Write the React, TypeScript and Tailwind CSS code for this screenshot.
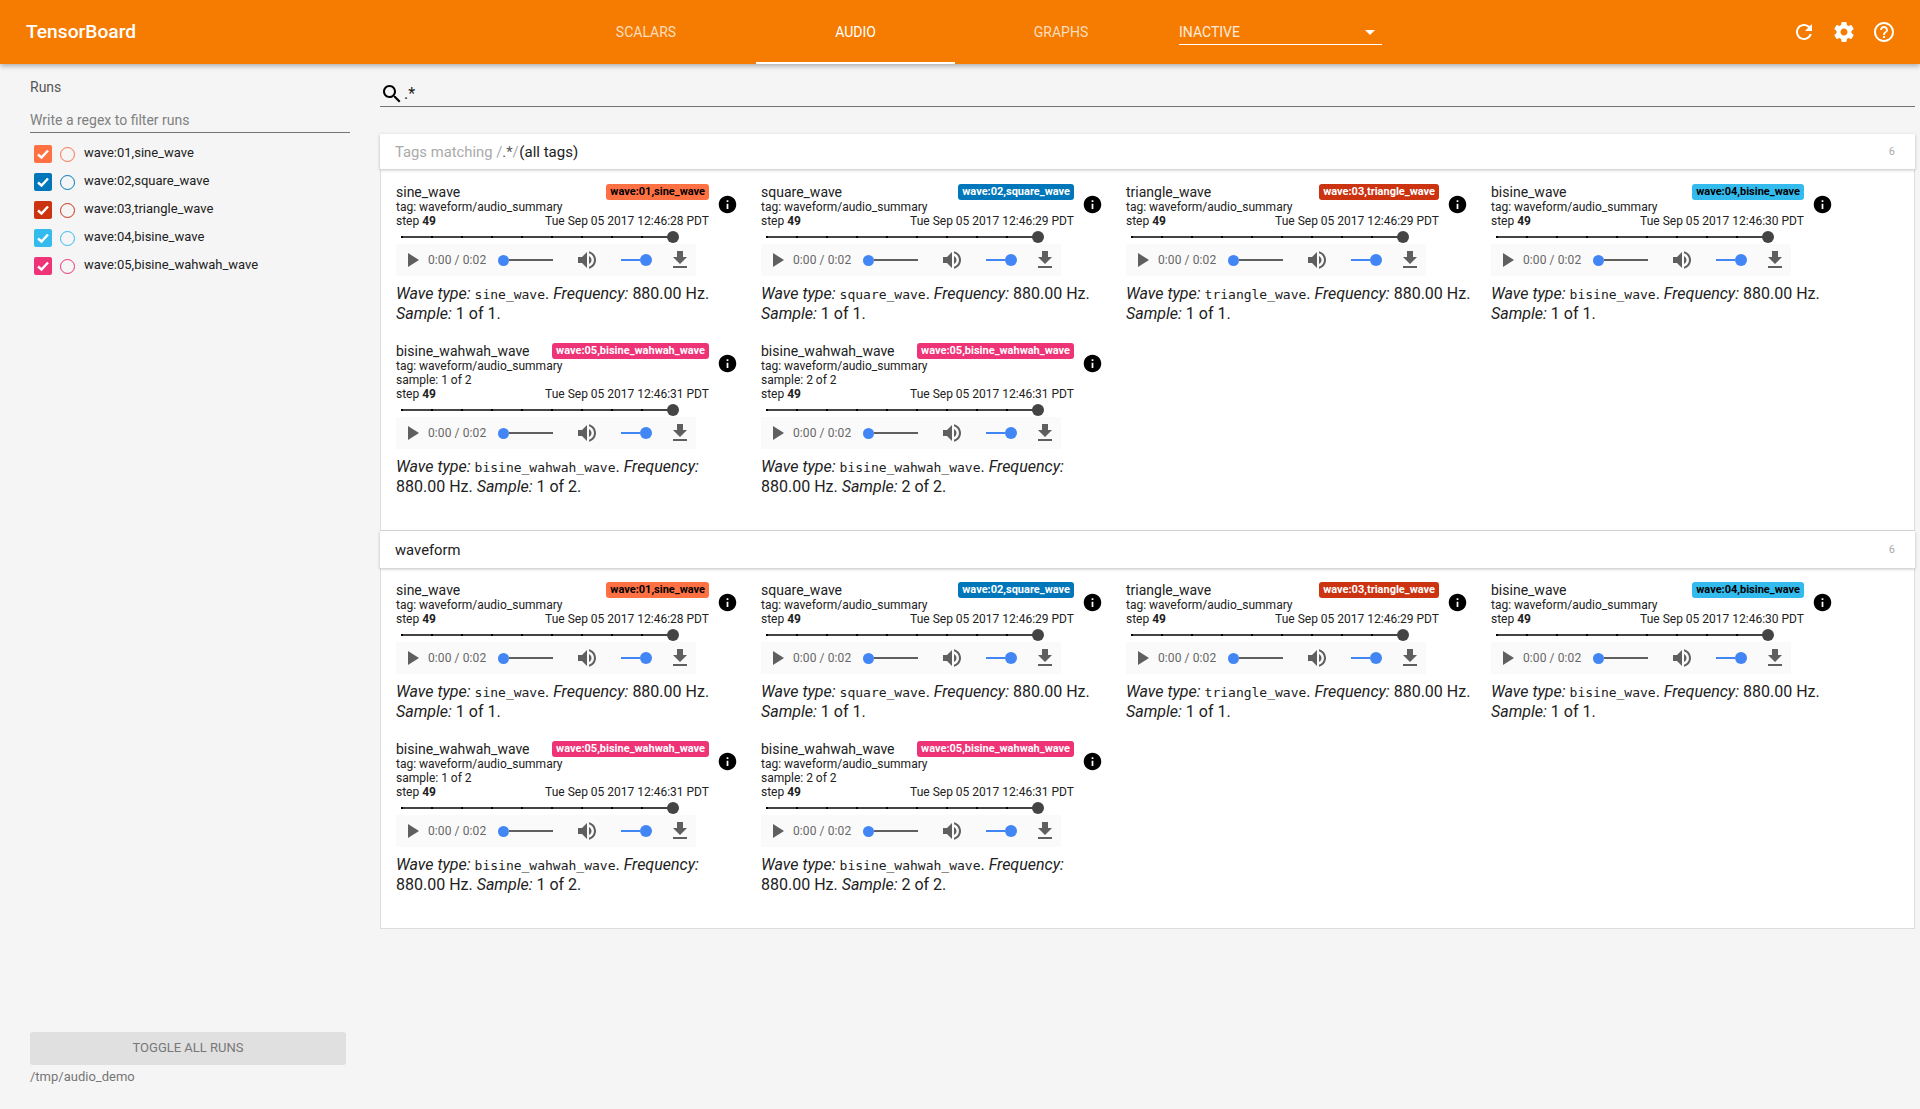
import React from 'react';

const runs = [
  { name: 'wave:01,sine_wave', color: '#ff7043' },
  { name: 'wave:02,square_wave', color: '#0077bb' },
  { name: 'wave:03,triangle_wave', color: '#cc3311' },
  { name: 'wave:04,bisine_wave', color: '#33bbee' },
  { name: 'wave:05,bisine_wahwah_wave', color: '#ee3377' },
];

const cards = [
  { title: 'sine_wave', run: 0, wave: 'sine_wave', date: 'Tue Sep 05 2017 12:46:28 PDT', n: 1, of: 1, dark: true },
  { title: 'square_wave', run: 1, wave: 'square_wave', date: 'Tue Sep 05 2017 12:46:29 PDT', n: 1, of: 1 },
  { title: 'triangle_wave', run: 2, wave: 'triangle_wave', date: 'Tue Sep 05 2017 12:46:29 PDT', n: 1, of: 1 },
  { title: 'bisine_wave', run: 3, wave: 'bisine_wave', date: 'Tue Sep 05 2017 12:46:30 PDT', n: 1, of: 1, dark: true },
  { title: 'bisine_wahwah_wave', run: 4, wave: 'bisine_wahwah_wave', date: 'Tue Sep 05 2017 12:46:31 PDT', n: 1, of: 2, sample: 'sample: 1 of 2' },
  { title: 'bisine_wahwah_wave', run: 4, wave: 'bisine_wahwah_wave', date: 'Tue Sep 05 2017 12:46:31 PDT', n: 2, of: 2, sample: 'sample: 2 of 2' },
];

const Icon = ({ d, className }: { d: string; className: string }) => (
  <svg viewBox="0 0 24 24" fill="currentColor" className={className}>
    <path d={d} />
  </svg>
);

const icons = {
  search: 'M15.5 14h-.79l-.28-.27C15.41 12.59 16 11.11 16 9.5 16 5.91 13.09 3 9.5 3S3 5.91 3 9.5 5.91 16 9.5 16c1.61 0 3.09-.59 4.23-1.57l.27.28v.79l5 4.99L20.49 19l-4.99-5zm-6 0C7.01 14 5 11.99 5 9.5S7.01 5 9.5 5 14 7.01 14 9.5 11.99 14 9.5 14z',
  refresh: 'M17.65 6.35C16.2 4.9 14.21 4 12 4c-4.42 0-7.99 3.58-7.99 8s3.57 8 7.99 8c3.73 0 6.84-2.55 7.73-6h-2.08c-.82 2.33-3.04 4-5.65 4-3.31 0-6-2.69-6-6s2.69-6 6-6c1.66 0 3.14.69 4.22 1.78L13 11h7V4l-2.35 2.35z',
  settings: 'M19.43 12.98c.04-.32.07-.64.07-.98s-.03-.66-.07-.98l2.11-1.65c.19-.15.24-.42.12-.64l-2-3.46c-.12-.22-.39-.3-.61-.22l-2.49 1c-.52-.4-1.08-.73-1.69-.98l-.38-2.65C14.46 2.18 14.25 2 14 2h-4c-.25 0-.46.18-.49.42l-.38 2.65c-.61.25-1.17.59-1.69.98l-2.49-1c-.23-.09-.49 0-.61.22l-2 3.46c-.13.22-.07.49.12.64l2.11 1.65c-.04.32-.07.65-.07.98s.03.66.07.98l-2.11 1.65c-.19.15-.24.42-.12.64l2 3.46c.12.22.39.3.61.22l2.49-1c.52.4 1.08.73 1.69.98l.38 2.65c.03.24.24.42.49.42h4c.25 0 .46-.18.49-.42l.38-2.65c.61-.25 1.17-.59 1.69-.98l2.49 1c.23.09.49 0 .61-.22l2-3.46c.12-.22.07-.49-.12-.64l-2.11-1.65zM12 15.5c-1.93 0-3.5-1.57-3.5-3.5s1.57-3.5 3.5-3.5 3.5 1.57 3.5 3.5-1.57 3.5-3.5 3.5z',
  help: 'M11 18h2v-2h-2v2zm1-16C6.48 2 2 6.48 2 12s4.48 10 10 10 10-4.48 10-10S17.52 2 12 2zm0 18c-4.41 0-8-3.59-8-8s3.59-8 8-8 8 3.59 8 8-3.59 8-8 8zm0-14c-2.21 0-4 1.79-4 4h2c0-1.1.9-2 2-2s2 .9 2 2c0 2-3 1.75-3 5h2c0-2.25 3-2.5 3-5 0-2.21-1.79-4-4-4z',
  info: 'M12 2C6.48 2 2 6.48 2 12s4.48 10 10 10 10-4.48 10-10S17.52 2 12 2zm1 15h-2v-6h2v6zm0-8h-2V7h2v2z',
  volume: 'M3 9v6h4l5 5V4L7 9H3zm13.5 3c0-1.77-1.02-3.29-2.5-4.03v8.05c1.48-.73 2.5-2.25 2.5-4.02zM14 3.23v2.06c2.89.86 5 3.54 5 6.71s-2.11 5.85-5 6.71v2.06c4.01-.91 7-4.49 7-8.77s-2.99-7.86-7-8.77z',
  download: 'M19 9h-4V3H9v6H5l7 7 7-7zM5 18v2h14v-2H5z',
};

const Player = () => (
  <div className="flex h-8 w-[300px] items-center bg-[#fafafa] text-[#5f6368]">
    <svg viewBox="0 0 11 14" fill="#5f5f5f" className="ml-3 h-[14px] w-[11px]">
      <path d="M0 0l11 7-11 7z" />
    </svg>
    <span className="ml-[9px] w-[58px] text-xs tracking-[0.1px] whitespace-nowrap text-[#666]">0:00 / 0:02</span>
    <div className="ml-3 flex w-[55px] items-center">
      <div className="h-[11px] w-[11px] rounded-full bg-[#4285f4]" />
      <div className="h-[2px] flex-1 bg-[#5f5f5f]" />
    </div>
    <Icon d={icons.volume} className="ml-[22px] h-6 w-6 text-[#5f5f5f]" />
    <div className="ml-[22px] flex w-[31px] items-center">
      <div className="h-[2px] flex-1 bg-[#4285f4]" />
      <div className="h-3 w-3 rounded-full bg-[#4285f4]" />
    </div>
    <Icon d={icons.download} className="ml-4 h-6 w-6 text-[#5f5f5f]" />
  </div>
);

const StepSlider = () => (
  <div className="ml-[5px] flex h-4 items-center pt-[2px]">
    <div className="flex h-[2px] w-[272px] items-center justify-between bg-[#444]">
      {Array.from({ length: 10 }, (_, i) => (
        <span key={i} className="h-[2px] w-[2px] bg-black" />
      ))}
    </div>
    <div className="-ml-[6px] h-3 w-3 rounded-full bg-[#444]" />
  </div>
);

const AudioCard = ({ card }: { card: (typeof cards)[number] }) => {
  const run = runs[card.run];
  return (
    <div className="mb-5 w-[365px]">
      <div className="flex">
        <div className="w-[313px] text-xs leading-[14px] text-[#212121]">
          <div className="flex h-4 items-center justify-between">
            <span className="text-sm leading-4">{card.title}</span>
            <span
              className={`h-4 rounded-[3px] px-1 text-[11px] leading-4 font-bold ${card.dark ? 'text-black' : 'text-white'}`}
              style={{ backgroundColor: run.color }}
            >
              {run.name}
            </span>
          </div>
          <div>tag: waveform/audio_summary</div>
          {card.sample && <div>{card.sample}</div>}
          <div className="flex justify-between">
            <span>
              step <b className="font-bold">49</b>
            </span>
            <span>{card.date}</span>
          </div>
          <StepSlider />
          <Player />
        </div>
        <Icon d={icons.info} className="mt-[10px] ml-2 h-[21px] w-[21px] text-black" />
      </div>
      <p className="mt-2 w-[350px] text-base leading-[19px] text-[#212121]">
        <i>Wave type:</i> <code className="font-['DejaVu_Sans_Mono',monospace] text-[13px]">{card.wave}</code>. <i>Frequency:</i> 880.00 Hz. <i>Sample:</i> {card.n} of {card.of}.
      </p>
    </div>
  );
};

const Section = ({ title, tall }: { title: React.ReactNode; tall?: boolean }) => (
  <section>
    <div className={`relative flex items-center justify-between bg-white pt-[1px] pr-[20px] pl-[15px] shadow-[0_1px_3px_rgba(0,0,0,0.25)] ${tall ? 'h-[37px]' : 'h-[35px]'}`}>
      <span className="text-[14.8px] text-[#212121]">{title}</span>
      <span className="text-[11px] text-[#aaa]">6</span>
    </div>
    <div className={`flex flex-wrap border-x border-b border-[#ddd] bg-white pb-[14px] pl-[15px] ${tall ? 'pt-[14px]' : 'pt-[15px]'}`}>
      {cards.map((c, i) => (
        <AudioCard key={i} card={c} />
      ))}
    </div>
  </section>
);

export default function App() {
  return (
    <div className="flex h-[1109px] flex-col overflow-hidden bg-[#f5f5f5] font-['Roboto',sans-serif]">
      <header className="relative z-10 flex h-16 items-center bg-[#f57c00] text-white shadow-[0_2px_5px_rgba(0,0,0,0.3)]">
        <div className="w-[536px] pl-[26px] text-[19.2px] font-medium">TensorBoard</div>
        <nav className="flex h-full text-sm">
          <div className="flex w-[220px] items-center justify-center text-white/75">SCALARS</div>
          <div className="flex w-[199px] items-center justify-center border-b-2 border-white pt-[2px]">AUDIO</div>
          <div className="flex w-[212px] items-center justify-center text-white/75">GRAPHS</div>
        </nav>
        <div className="mt-[1px] ml-3 flex h-6 w-[203px] items-center justify-between border-b border-white pr-[7px] text-sm text-white/85">
          <span>INACTIVE</span>
          <svg viewBox="0 0 10 5" fill="white" className="h-[5px] w-[10px]">
            <path d="M0 0h10L5 5z" />
          </svg>
        </div>
        <div className="ml-auto flex pr-4">
          <span className="flex h-10 w-10 items-center justify-center"><Icon d={icons.refresh} className="h-6 w-6" /></span>
          <span className="flex h-10 w-10 items-center justify-center"><Icon d={icons.settings} className="h-6 w-6" /></span>
          <span className="flex h-10 w-10 items-center justify-center"><Icon d={icons.help} className="h-6 w-6" /></span>
        </div>
      </header>

      <div className="flex flex-1">
        <aside className="flex w-[380px] flex-col pl-[30px]">
          <div className="mt-[15px] text-sm leading-4 text-[#555]">Runs</div>
          <div className="mt-[17px] h-[21px] w-[320px] border-b border-[#757575] text-sm leading-4 text-[#808080]">Write a regex to filter runs</div>
          <div className="mt-[7px]">
            {runs.map(r => (
              <div key={r.name} className="flex h-7 items-center pl-1">
                <span className="flex h-[18px] w-[18px] items-center justify-center rounded-[2px]" style={{ backgroundColor: r.color }}>
                  <svg viewBox="0 0 18 18" fill="none" stroke="white" strokeWidth="2.4" className="h-[18px] w-[18px]">
                    <path d="M4 9.5l3.5 3L14 5.5" />
                  </svg>
                </span>
                <span className="ml-2 h-[15px] w-[15px] rounded-full border-[1.5px]" style={{ borderColor: r.color }} />
                <span className="mb-[2px] ml-[9px] text-[13px] text-[#212121]">{r.name}</span>
              </div>
            ))}
          </div>
          <div className="mt-auto mb-[23px]">
            <div className="flex h-[33px] w-[316px] items-center justify-center rounded-[3px] bg-[#e0e0e0] text-[13px] text-[#777]">TOGGLE ALL RUNS</div>
            <div className="mt-[2px] text-[13px] text-[#757575]">/tmp/audio_demo</div>
          </div>
        </aside>

        <main className="flex-1 pr-[5px]">
          <div className="flex h-[43px] items-center border-b border-[#757575] pt-[18px] text-base text-[#212121]">
            <Icon d={icons.search} className="h-6 w-6 shrink-0 text-black" />
            <span>.*</span>
          </div>
          <div className="mt-[27px]">
            <Section
              title={
                <>
                  <span className="text-[#aaa]">Tags matching /</span>
                  <span className="text-[#555]">.*</span>
                  <span className="text-[#aaa]">/</span> <span className="-ml-[3px] text-[15px]">(all tags)</span>
                </>
              }
            />
            <Section title="waveform" tall />
          </div>
        </main>
      </div>
    </div>
  );
}
